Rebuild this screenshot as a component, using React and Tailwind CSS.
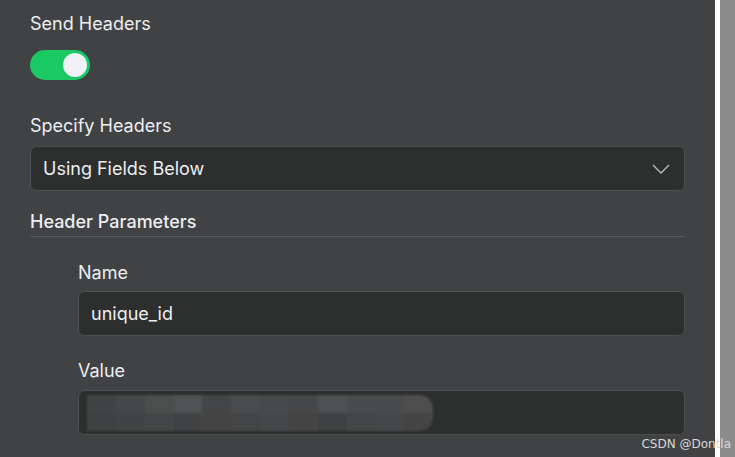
export default function App() {
  return (
    <div className="flex h-[457px] w-[735px] overflow-hidden bg-[#8c8c8c]" style={{ fontFamily: "Inter, 'Noto Sans', sans-serif" }}>
      <div className="relative flex w-[715px] flex-col bg-[#414244] px-[30px] pt-[12px] text-[#eceef2]">
        <div className="text-[18px] leading-[24px]">Send Headers</div>
        <div className="mt-[14px] flex h-[30px] w-[60px] items-center justify-end rounded-full bg-[#1ac964] pr-[3px]">
          <div className="h-[24px] w-[24px] rounded-full bg-[#f0f2f7]" />
        </div>
        <div className="mt-[34px] text-[18px] leading-[24px]">Specify Headers</div>
        <div className="mt-[8px] flex h-[45px] items-center justify-between rounded-[6px] border border-[#4e4f51] bg-[#2d2f2e] pl-[12px] pr-[14px]">
          <span className="text-[18px]">Using Fields Below</span>
          <svg width="18" height="10" viewBox="0 0 18 10" fill="none" stroke="#b8bac0" strokeWidth="1.4">
            <path d="M1 1 L9 9 L17 1" />
          </svg>
        </div>
        <div className="mt-[19px] text-[18px] font-medium leading-[24px]">Header Parameters</div>
        <div className="mt-[2px] h-px bg-[#57585a]" />
        <div className="flex flex-col pl-[48px]">
          <div className="mt-[24px] text-[18px] leading-[24px]">Name</div>
          <div className="mt-[6px] flex h-[45px] items-center rounded-[6px] border border-[#4e4f51] bg-[#2d2f2e] pl-[12px]">
            <span className="text-[18px]">unique_id</span>
          </div>
          <div className="mt-[23px] text-[18px] leading-[24px]">Value</div>
          <div className="mt-[7px] flex h-[45px] items-center overflow-hidden rounded-[6px] border border-[#4e4f51] bg-[#2d2f2e] pl-[8px]">
            <div className="grid h-[36px] w-[346px] grid-cols-[repeat(12,1fr)] grid-rows-2 overflow-hidden rounded-r-[14px] opacity-90 blur-[1px]">
              <div className="bg-[#454647]" /><div className="bg-[#4a4b4c]" /><div className="bg-[#505152]" /><div className="bg-[#565758]" /><div className="bg-[#48494a]" /><div className="bg-[#4f5051]" /><div className="bg-[#4c4d4e]" /><div className="bg-[#4a4b4c]" /><div className="bg-[#555657]" /><div className="bg-[#4e4f50]" /><div className="bg-[#4e4f50]" /><div className="bg-[#515253]" />
              <div className="bg-[#434445]" /><div className="bg-[#454647]" /><div className="bg-[#48494a]" /><div className="bg-[#444546]" /><div className="bg-[#474849]" /><div className="bg-[#48494a]" /><div className="bg-[#4a4b4c]" /><div className="bg-[#474849]" /><div className="bg-[#424344]" /><div className="bg-[#48494a]" /><div className="bg-[#4a4b4c]" /><div className="bg-[#474849]" />
            </div>
          </div>
        </div>
        <div className="absolute bottom-[6px] right-[-16px] text-[12px] leading-[14px] text-[#d8d8d8]" style={{ fontFamily: "'DejaVu Sans', sans-serif" }}>CSDN @Dontla</div>
      </div>
      <div className="w-[5px] bg-white" />
    </div>
  );
}
